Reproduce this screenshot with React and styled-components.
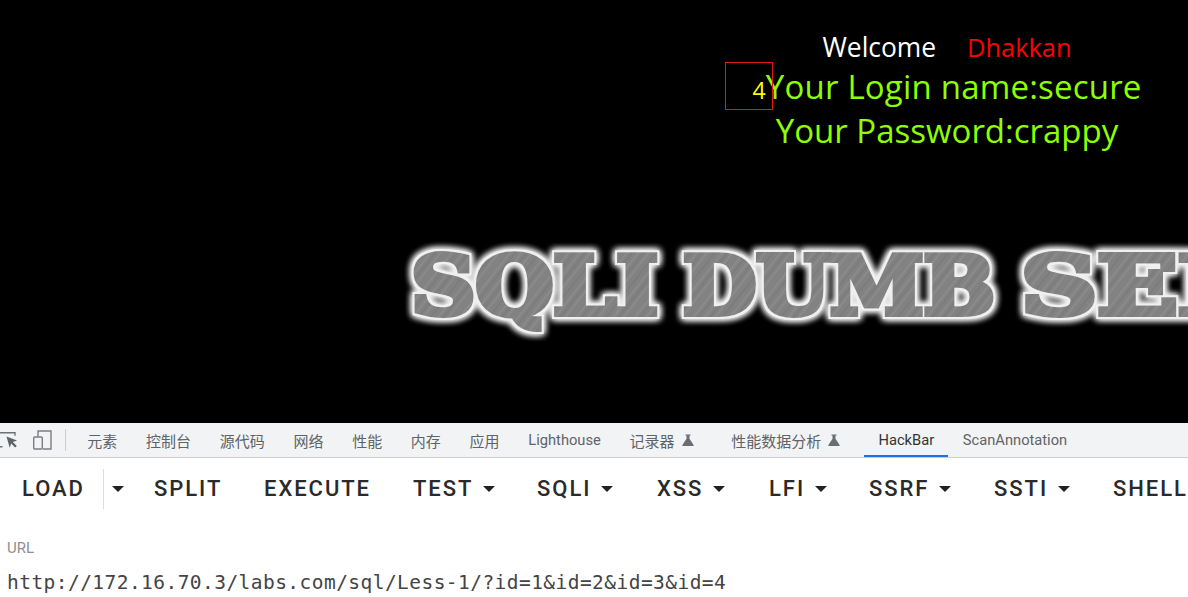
import React from 'react';
import styled, { createGlobalStyle } from 'styled-components';

const GlobalStyle = createGlobalStyle`
  html, body {
    margin: 0;
    padding: 0;
    background: #fff;
    overflow: hidden;
  }
`;

const Page = styled.div`
  width: 1188px;
  height: 597px;
  overflow: hidden;
  display: flex;
  flex-direction: column;
`;

const Hero = styled.section`
  height: 423px;
  flex-shrink: 0;
  background: #000;
  overflow: hidden;
  font-family: "Open Sans", "Noto Sans", sans-serif;
`;

const Greeting = styled.div`
  width: 500px;
  margin-left: 697px;
  padding-top: 29px;
  text-align: center;
`;

const WelcomeLine = styled.div`
  font-size: 26.4px;
  line-height: 36px;
  color: #fff;
  white-space: nowrap;
`;

const UserName = styled.span`
  margin-left: 31px;
  font-size: 25.4px;
  color: #f00;
`;

const CredLine = styled.div`
  font-size: 33px;
  line-height: 44px;
  letter-spacing: ${(p) => p.$spread || 0}px;
  color: #8cff00;
  white-space: nowrap;
`;

const Marker = styled.span`
  position: relative;
  font-size: 23px;
  line-height: 0;
  color: #ff0;
`;

const MarkerBox = styled.span`
  position: absolute;
  left: -27px;
  top: -12px;
  width: 46px;
  height: 46px;
  border: 1px solid #e01818;
`;

const Logo = styled.svg`
  display: block;
  width: 900px;
  height: 110px;
  margin: 85px 0 0 400px;
`;

const DevBar = styled.nav`
  height: 34px;
  flex-shrink: 0;
  display: flex;
  align-items: stretch;
  background: #f1f3f4;
  border-bottom: 1px solid #cbcdd0;
  font-family: Roboto, "Noto Sans CJK SC", sans-serif;
  color: #5f6368;
`;

const DevIcons = styled.div`
  width: 66px;
  display: flex;
  align-items: center;
  gap: 15px;
  position: relative;
  flex-shrink: 0;
  margin-right: 7px;

  &::after {
    content: "";
    position: absolute;
    right: 0;
    top: 6px;
    bottom: 6px;
    width: 1px;
    background: #ccc;
  }
`;

const Tab = styled.div`
  display: flex;
  align-items: center;
  gap: 7px;
  padding: 0 14.35px;
  margin-right: ${(p) => p.$after || 0}px;
  white-space: nowrap;
  font-size: ${(p) => (p.$cjk ? 15 : 14.7)}px;
  color: ${(p) => (p.$active ? '#333' : '#5f6368')};
  box-shadow: ${(p) => (p.$active ? 'inset 0 -2px 0 #1a73e8' : 'none')};
`;

const ToolBar = styled.div`
  height: 61px;
  flex-shrink: 0;
  display: flex;
  align-items: center;
  padding-left: 22px;
  font-family: Roboto, sans-serif;
  font-size: 22px;
  font-weight: 500;
  letter-spacing: 1.95px;
  color: #2a2a2a;
  white-space: nowrap;
`;

const ToolButton = styled.div`
  display: flex;
  align-items: center;
  flex-shrink: 0;
  width: ${(p) => p.$w}px;
`;

const Divider = styled.div`
  width: 1px;
  height: 40px;
  background: #ddd;
  margin-right: 8px;
  flex-shrink: 0;
`;

const Caret = styled.span`
  width: 0;
  height: 0;
  flex-shrink: 0;
  margin-left: ${(p) => p.$gap ?? 10}px;
  margin-right: ${(p) => p.$after || 0}px;
  border-left: 6px solid transparent;
  border-right: 6px solid transparent;
  border-top: 6px solid #212121;
`;

const UrlField = styled.div`
  padding: 19px 0 0 7px;
`;

const UrlLabel = styled.div`
  font-family: Roboto, sans-serif;
  font-size: 15px;
  line-height: 20px;
  color: #8f8f8f;
`;

const UrlValue = styled.div`
  margin-top: 13px;
  font-family: "DejaVu Sans Mono", monospace;
  font-size: 19.5px;
  line-height: 24px;
  letter-spacing: 0.45px;
  color: #444;
  white-space: nowrap;
`;

const FlaskIcon = () => (
  <svg width="12" height="12" viewBox="0 0 12 12">
    <path d="M3.500 0.500h5v1h-1v3.200L11.600 11a.7.7 0 0 1-.6 1H1a.7.7 0 0 1-.6-1L4.500 4.700V1.500h-1z" fill="#6a6e73" />
  </svg>
);

const InspectIcon = () => (
  <svg width="18" height="20" viewBox="0 0 18 20" fill="none">
    <path d="M0 2.700h15v3M0 16.700h2.500" stroke="#6e7276" strokeWidth="1.4" />
    <path d="M6.500 6.500l10.500 4-4.200 1.500 4 3.900-1.700 1.700-3.900-4-1.500 4.200z" fill="#5f6368" />
  </svg>
);

const DeviceIcon = () => (
  <svg width="19" height="20" viewBox="0 0 19 20" fill="none" stroke="#7a7e82" strokeWidth="1.4">
    <path d="M5 6.500V1h13v18h-8" />
    <rect x="0.700" y="7" width="8.600" height="12" rx="1" />
  </svg>
);

const BrushedLogo = () => (
  <Logo viewBox="0 0 900 110">
    <defs>
      <pattern id="brush" width="46" height="46" patternUnits="userSpaceOnUse" patternTransform="rotate(-52)">
        <rect width="46" height="46" fill="#828282" />
        <path d="M0 4h46M0 13h46M0 21h46M0 33h46M0 41h46" stroke="#979797" strokeWidth="0.7" />
        <path d="M0 8h46M0 17h46M0 27h46M0 37h46" stroke="#737373" strokeWidth="0.8" />
      </pattern>
      <filter id="chrome" x="-5%" y="-30%" width="110%" height="160%">
        <feMorphology in="SourceAlpha" operator="dilate" radius="2" result="outer" />
        <feFlood floodColor="#f0f0f0" />
        <feComposite in2="outer" operator="in" result="ring" />
        <feGaussianBlur in="ring" stdDeviation="3.800" result="glow" />
        <feGaussianBlur in="SourceGraphic" stdDeviation="0.500" result="soft" />
        <feMerge>
          <feMergeNode in="glow" />
          <feMergeNode in="glow" />
          <feMergeNode in="glow" />
          <feMergeNode in="ring" />
          <feMergeNode in="soft" />
        </feMerge>
      </filter>
    </defs>
    <g
      fontFamily='"DejaVu Serif", serif'
      fontWeight="700"
      fontSize="80"
      fill="url(#brush)"
      stroke="url(#brush)"
      strokeWidth="6"
      filter="url(#chrome)"
    >
      <text x="11" y="76" textLength="247" lengthAdjust="spacingAndGlyphs">SQLI</text>
      <text x="283" y="76" textLength="312" lengthAdjust="spacingAndGlyphs">DUMB</text>
      <text x="621" y="76" textLength="450" lengthAdjust="spacingAndGlyphs">SERIES</text>
    </g>
  </Logo>
);

const devTabs = [
  { label: '元素', cjk: true },
  { label: '控制台', cjk: true },
  { label: '源代码', cjk: true },
  { label: '网络', cjk: true },
  { label: '性能', cjk: true },
  { label: '内存', cjk: true },
  { label: '应用', cjk: true },
  { label: 'Lighthouse' },
  { label: '记录器', cjk: true, flask: true, after: 9 },
  { label: '性能数据分析', cjk: true, flask: true, after: 9.5 },
  { label: 'HackBar', active: true },
  { label: 'ScanAnnotation' },
];

const tools = [
  { label: 'SPLIT', w: 110 },
  { label: 'EXECUTE', w: 149 },
  { label: 'TEST', w: 124, caret: true },
  { label: 'SQLI', w: 120, caret: true },
  { label: 'XSS', w: 112, caret: true },
  { label: 'LFI', w: 100, caret: true },
  { label: 'SSRF', w: 125, caret: true },
  { label: 'SSTI', w: 119, caret: true },
  { label: 'SHELL', w: 90 },
];

const App = () => (
  <Page>
    <GlobalStyle />
    <Hero>
      <Greeting>
        <WelcomeLine>
          Welcome
          <UserName>Dhakkan</UserName>
        </WelcomeLine>
        <CredLine $spread={0.2}>
          <Marker>
            4
            <MarkerBox />
          </Marker>
          Your Login name:secure
        </CredLine>
        <CredLine>Your Password:crappy</CredLine>
      </Greeting>
      <BrushedLogo />
    </Hero>
    <DevBar>
      <DevIcons>
        <InspectIcon />
        <DeviceIcon />
      </DevIcons>
      {devTabs.map((tab) => (
        <Tab key={tab.label} $cjk={tab.cjk} $active={tab.active} $after={tab.after}>
          {tab.label}
          {tab.flask && <FlaskIcon />}
        </Tab>
      ))}
    </DevBar>
    <ToolBar>
      <ToolButton $w={81}>LOAD</ToolButton>
      <Divider />
      <Caret $gap={0} $after={30} />
      {tools.map((tool) => (
        <ToolButton key={tool.label} $w={tool.w}>
          {tool.label}
          {tool.caret && <Caret />}
        </ToolButton>
      ))}
    </ToolBar>
    <UrlField>
      <UrlLabel>URL</UrlLabel>
      <UrlValue>http://172.16.70.3/labs.com/sql/Less-1/?id=1&amp;id=2&amp;id=3&amp;id=4</UrlValue>
    </UrlField>
  </Page>
);

export default App;
